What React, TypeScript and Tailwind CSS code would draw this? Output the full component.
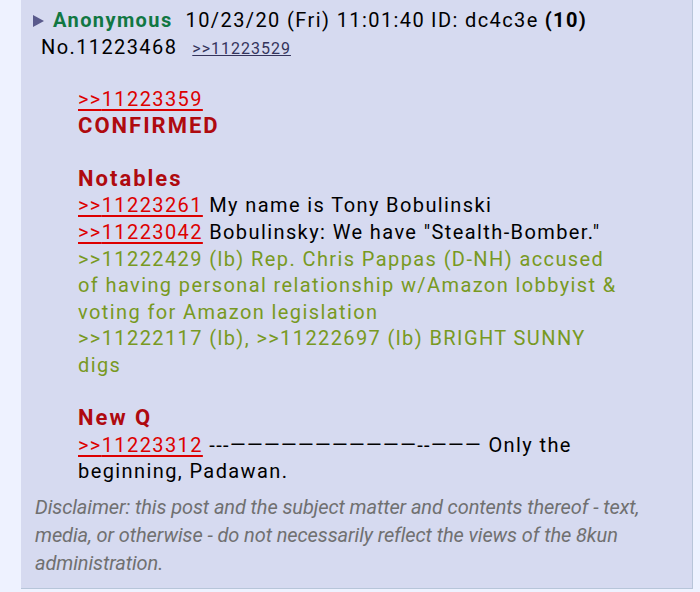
import React from 'react';

const RedLink: React.FC<{ id: string }> = ({ id }) => (
  <a href={`#${id}`} className="text-[#dd0000] underline decoration-[#dd0000] decoration-2 underline-offset-[3px]">
    &gt;&gt;{id}
  </a>
);

const Heading: React.FC<{ children: React.ReactNode }> = ({ children }) => (
  <div className="font-bold text-[22px] tracking-[2px] text-[#af0a0f]">{children}</div>
);

const Green: React.FC<{ children: React.ReactNode }> = ({ children }) => (
  <div className="text-[#789922]">{children}</div>
);

const App: React.FC = () => {
  return (
    <div className="w-[700px] h-[592px] overflow-hidden bg-[#eef2ff] font-['Roboto',sans-serif] text-black">
      <div className="ml-[21px] w-[672px] h-[589px] bg-[#d6daf0] border-r border-b border-[#b7c5d9]">
        <div className="pl-[12px] pt-[7px] text-[20px] leading-[27px] tracking-[1.4px]">
          <div className="flex items-center">
            <svg width="11" height="12" viewBox="0 0 11 12" className="mr-[9px]">
              <polygon points="0,0 11,6 0,12" fill="#5a5a8c" />
            </svg>
            <span className="font-bold text-[#117743]">Anonymous</span>
            <span className="ml-[13px]">10/23/20 (Fri) 11:01:40</span>
            <span className="ml-[6px]">ID: dc4c3e</span>
            <span className="ml-[6px] font-bold">(10)</span>
          </div>
          <div className="pl-[8px] flex items-baseline">
            <span>No.11223468</span>
            <a href="#11223529" className="ml-[15px] text-[16px] tracking-[1px] text-[#34345c] underline">
              &gt;&gt;11223529
            </a>
          </div>
        </div>
        <div className="ml-[57px] mt-[24px] w-[545px] text-[20px] leading-[26.6px] tracking-[1.4px]">
          <RedLink id="11223359" />
          <Heading>CONFIRMED</Heading>
          <div className="h-[26.6px]" />
          <Heading>Notables</Heading>
          <div>
            <RedLink id="11223261" /> My name is Tony Bobulinski
          </div>
          <div>
            <RedLink id="11223042" /> Bobulinsky: We have "Stealth-Bomber."
          </div>
          <Green>
            &gt;&gt;11222429 (lb) Rep. Chris Pappas (D-NH) accused of having personal relationship w/Amazon lobbyist &amp; voting for Amazon legislation
          </Green>
          <Green>&gt;&gt;11222117 (lb), &gt;&gt;11222697 (lb) BRIGHT SUNNY digs</Green>
          <div className="h-[26.6px]" />
          <Heading>New Q</Heading>
          <div>
            <RedLink id="11223312" /> ---———————————--——— Only the beginning, Padawan.
          </div>
        </div>
        <div className="ml-[14px] mt-[8px] w-[620px] italic text-[20px] leading-[28px] tracking-[-0.1px] text-[#707070]">
          Disclaimer: this post and the subject matter and contents thereof - text, media, or otherwise - do not necessarily reflect the views of the 8kun administration.
        </div>
      </div>
    </div>
  );
};

export default App;
